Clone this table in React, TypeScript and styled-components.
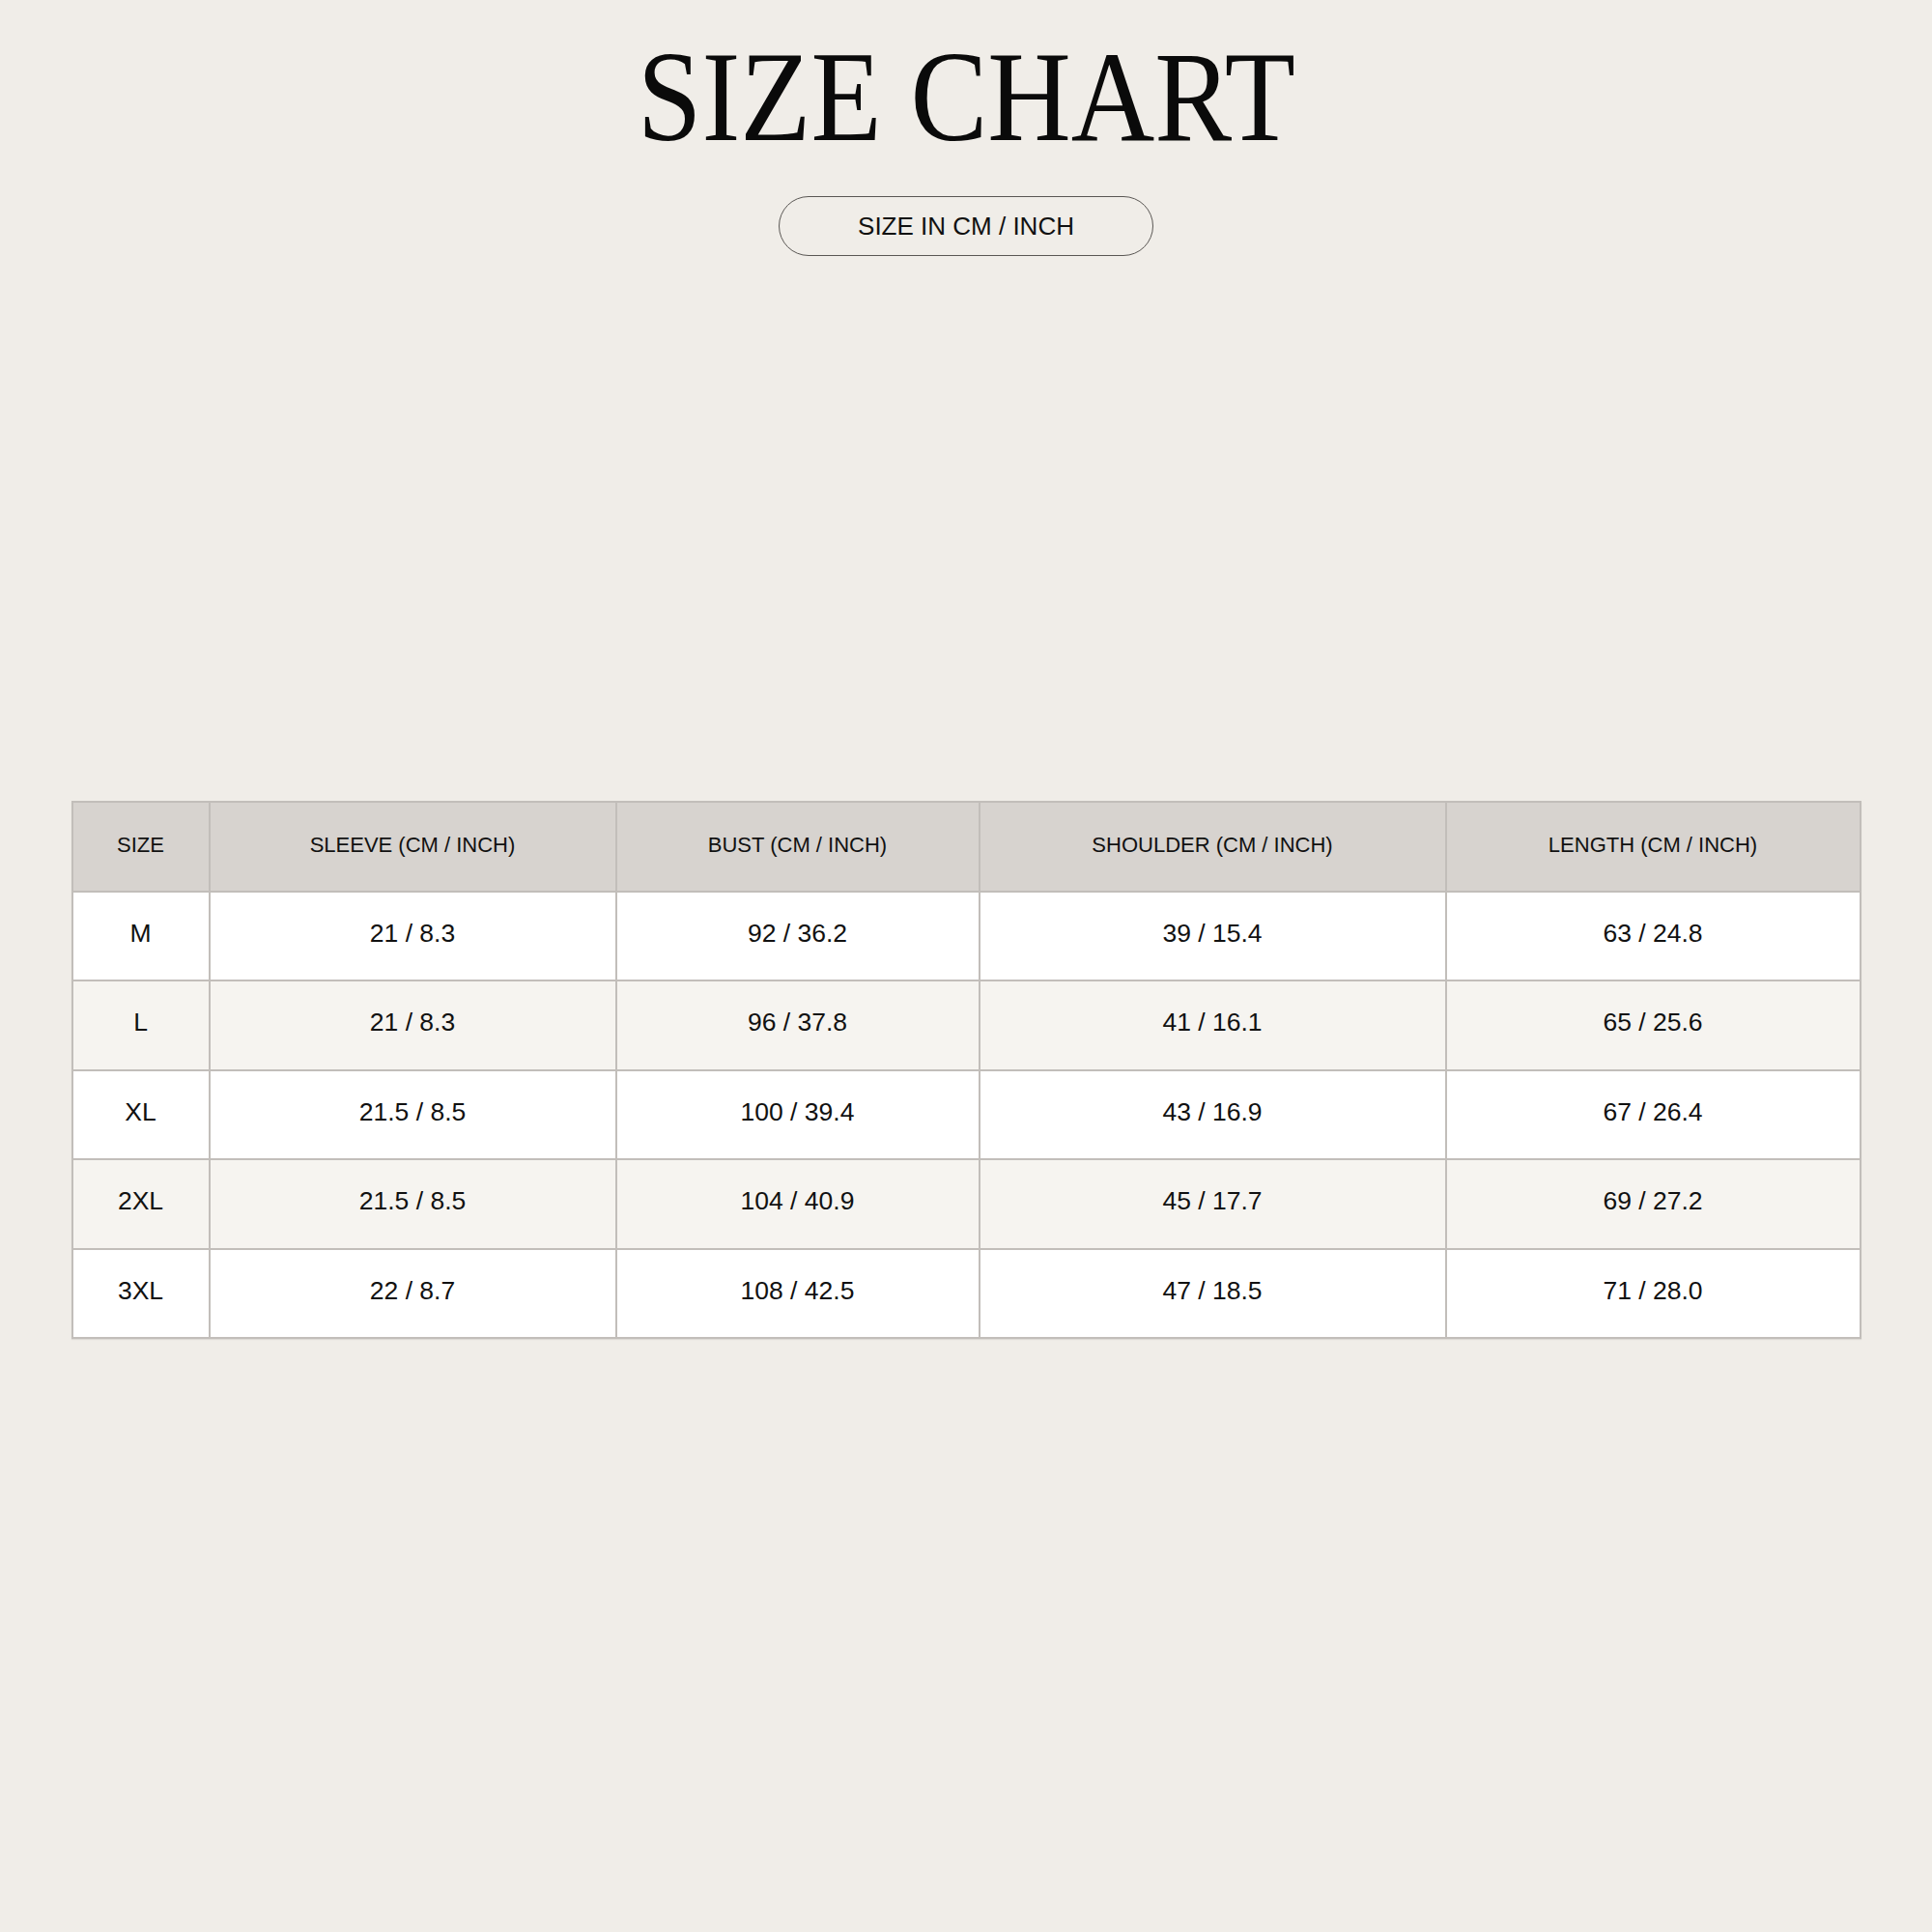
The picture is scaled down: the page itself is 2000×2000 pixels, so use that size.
import React from 'react';
import styled, { createGlobalStyle } from 'styled-components';

const colors = {
    page: '#f0ede8',
    head: '#d7d3cf',
    rowWhite: '#ffffff',
    rowAlt: '#f6f4f0',
    line: '#c2beba',
    ink: '#111111',
};

const GlobalStyle = createGlobalStyle`
    html, body {
        margin: 0;
        padding: 0;
        background: ${colors.page};
    }
    body {
        font-family: "Liberation Sans", Arial, sans-serif;
        color: ${colors.ink};
    }
`;

const PageLayout = styled.div`
    width: 2000px;
    min-height: 2000px;
    display: flex;
    flex-direction: column;
    align-items: center;
    padding-top: 34px;
    box-sizing: border-box;
`;

const Headline = styled.h1`
    margin: 0;
    height: 133px;
    font-family: "Liberation Serif", "Times New Roman", serif;
    font-weight: normal;
    font-size: 133px;
    line-height: 1;
    color: #0a0a0a;
    white-space: nowrap;
    transform: scaleX(0.9);
`;

const UnitPill = styled.div`
    margin-top: 36px;
    width: 388px;
    height: 62px;
    box-sizing: border-box;
    border: 1.5px solid #5a5754;
    border-radius: 31px;
    display: flex;
    align-items: center;
    justify-content: center;
    font-size: 26px;
    color: ${colors.ink};
`;

const ChartTable = styled.table`
    margin-top: 564px;
    width: 1851px;
    table-layout: fixed;
    border-collapse: collapse;
    border: 2px solid ${colors.line};
    box-shadow: 0 1px 1px rgba(0, 0, 0, 0.08);
`;

const HeadCell = styled.th`
    height: 88.5px;
    padding: 0 0 2px;
    background: ${colors.head};
    border: 2px solid ${colors.line};
    font-weight: normal;
    font-size: 22px;
    text-align: center;
    vertical-align: middle;
`;

const Row = styled.tr<{ $alt: boolean }>`
    background: ${(p) => (p.$alt ? colors.rowAlt : colors.rowWhite)};
`;

const Cell = styled.td`
    height: 85.5px;
    padding: 0 0 5px;
    border: 2px solid ${colors.line};
    font-size: 26.5px;
    text-align: center;
    vertical-align: middle;
`;

const columns = [
    { label: 'SIZE', width: 142 },
    { label: 'SLEEVE (CM / INCH)', width: 421 },
    { label: 'BUST (CM / INCH)', width: 376 },
    { label: 'SHOULDER (CM / INCH)', width: 483 },
    { label: 'LENGTH (CM / INCH)', width: 429 },
];

const rows = [
    ['M', '21 / 8.3', '92 / 36.2', '39 / 15.4', '63 / 24.8'],
    ['L', '21 / 8.3', '96 / 37.8', '41 / 16.1', '65 / 25.6'],
    ['XL', '21.5 / 8.5', '100 / 39.4', '43 / 16.9', '67 / 26.4'],
    ['2XL', '21.5 / 8.5', '104 / 40.9', '45 / 17.7', '69 / 27.2'],
    ['3XL', '22 / 8.7', '108 / 42.5', '47 / 18.5', '71 / 28.0'],
];

export default function App() {
    return (
        <>
            <GlobalStyle />
            <PageLayout>
                <Headline>SIZE CHART</Headline>
                <UnitPill>SIZE IN CM / INCH</UnitPill>
                <ChartTable>
                    <colgroup>
                        {columns.map((c) => (
                            <col key={c.label} style={{ width: c.width }} />
                        ))}
                    </colgroup>
                    <thead>
                        <tr>
                            {columns.map((c) => (
                                <HeadCell key={c.label}>{c.label}</HeadCell>
                            ))}
                        </tr>
                    </thead>
                    <tbody>
                        {rows.map((r, i) => (
                            <Row key={r[0]} $alt={i % 2 === 1}>
                                {r.map((v, j) => (
                                    <Cell key={j}>{v}</Cell>
                                ))}
                            </Row>
                        ))}
                    </tbody>
                </ChartTable>
            </PageLayout>
        </>
    );
}
